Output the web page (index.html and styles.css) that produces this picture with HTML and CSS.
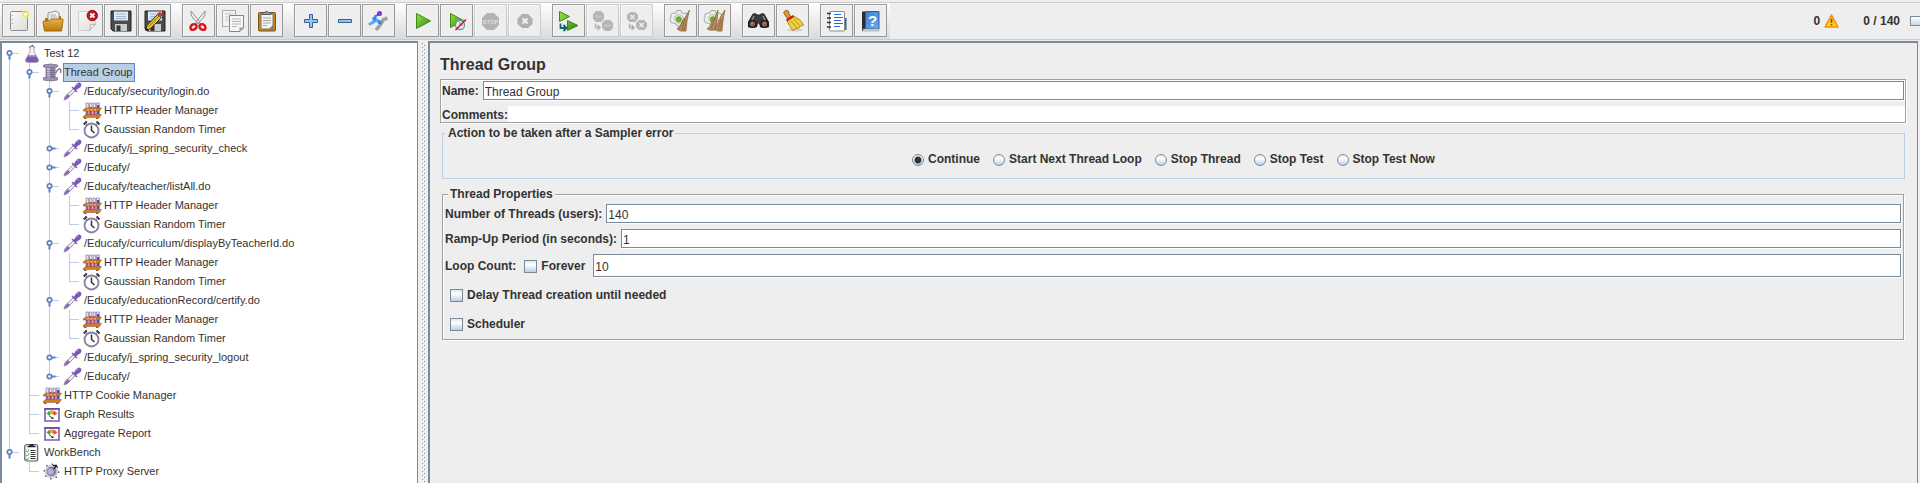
FILE: index.html
```html
<!DOCTYPE html>
<html lang="en">
<head>
<meta charset="utf-8">
<title>Test 12</title>
<link rel="stylesheet" href="styles.css">
</head>
<body>
<svg class="defs" aria-hidden="true">
  <defs>
    <linearGradient id="g-green" x1="0" y1="0" x2="1" y2="1"><stop offset="0" stop-color="#9be04a"/><stop offset="1" stop-color="#2c8a0c"/></linearGradient>
    <linearGradient id="g-folder" x1="0" y1="0" x2="0" y2="1"><stop offset="0" stop-color="#e8b34a"/><stop offset="1" stop-color="#b9780c"/></linearGradient>
    <linearGradient id="g-page" x1="0" y1="0" x2="1" y2="1"><stop offset="0" stop-color="#fafafa"/><stop offset="1" stop-color="#dcdcdc"/></linearGradient>
    <linearGradient id="g-book" x1="0" y1="0" x2="1" y2="1"><stop offset="0" stop-color="#3d7fd6"/><stop offset="1" stop-color="#6fa9ec"/></linearGradient>
    <linearGradient id="g-warn" x1="0" y1="0" x2="0" y2="1"><stop offset="0" stop-color="#ffa41c"/><stop offset="1" stop-color="#ffe600"/></linearGradient>
  </defs>
  <symbol id="flask" viewBox="0 0 20 19">
    <path d="M7 2.500h4v5l4.500 8.500q.5 2.500-2 2.500h-9q-2.500 0-2-2.500L7 7.500z" fill="#f4f2f8" stroke="#a9a4b5"/>
    <path d="M5 11.500h8l2.300 4.500q.3 2-2 2H4.700q-2.300 0-2-2z" fill="#7d5bb5"/><path d="M5 11.500h8V13H4.500z" fill="#9a80ca"/>
    <path d="M6.500 3.500L8 1.500h2l1.500 2" fill="none" stroke="#444" stroke-dasharray="2 1"/>
  </symbol>
  <symbol id="spool" viewBox="0 0 20 19">
    <path d="M2.500 4h10v11h-10z" fill="#8e84a6"/><path d="M4 4h3v11H4z" fill="#c4bcd3"/>
    <path d="M3 7.500h9.500M3 9.500h9.500M3 11.500h9.500M3 13.500h9.500" stroke="#6f658a" stroke-width=".5"/>
    <path d="M.5 2q7-2 14 0v2q-7 1.500-14 0zM.5 14.500q7 1.500 14 0V17q-7 2-14 0z" fill="#a198b4" stroke="#6e6580" stroke-width=".7"/>
    <path d="M12.500 10.500q2-4.500 4-4.500t1 4" fill="none" stroke="#7d7592" stroke-width="1.400"/>
  </symbol>
  <symbol id="dropper" viewBox="0 0 20 19">
    <path d="M1 18l1-3.500L10.500 6.500l2 2L4.500 16.500z" fill="#ececf0" stroke="#8883a0" stroke-width=".9"/>
    <path d="M1.500 17.500l1-3L5 12l2 2-2.500 2.500z" fill="#8a68c0"/>
    <path d="M9 5l5 5" stroke="#7b5ab4" stroke-width="1.500"/>
    <path d="M10.500 6.500l2.500-4q2.500-3 4.500-1.500 2 2-.5 4.500l-4.500 3z" fill="#7b57b8"/><path d="M13.500 3l2-1" stroke="#b9a3df"/>
  </symbol>
  <symbol id="rack" viewBox="0 0 20 19">
    <path d="M3 2h2.400v13H3zM6.500 2h2.400v13H6.500zM10 2h2.400v13H10zM13.500 2h2.800v12h-2.800z" fill="#ebe7f4" stroke="#8f88a8" stroke-width=".8"/>
    <path d="M3 8h2v6H3z" fill="#8469b5"/><path d="M6.700 6h2v8h-2z" fill="#d03062"/><path d="M10.200 6h2v8h-2z" fill="#c34b8c"/><path d="M14 4h2.300v9H14z" fill="#4351c8"/>
    <path d="M0 9l3-2h15.500L16.500 10H0zM0 15.500l3-2h15.500l-2 3H0z" fill="#cf7a2c" stroke="#9b5315" stroke-width=".5"/>
    <path d="M4 8h2v1.500H4zM7.500 8h2v1.500h-2zM11 8h2v1.500h-2z" fill="#e9b27a"/>
    <path d="M1 16.500h2.500v1.500H1zM13 16.500h2.500v1.500H13z" fill="#a95c1b"/>
  </symbol>
  <symbol id="timer" viewBox="0 0 20 19">
    <path d="M.8 4.500l3-3M13.500 1.500l3 3" stroke="#39354a" stroke-width="2"/><path d="M3 4l2 2M14 4l-2 2" stroke="#555"/>
    <circle cx="8.500" cy="10.500" r="7" fill="#fff" stroke="#8a7fa3" stroke-width="1.800"/>
    <path d="M8.500 5.500v5l3 2.500" fill="none" stroke="#333" stroke-width="1.500"/>
  </symbol>
  <symbol id="graph" viewBox="0 0 20 19">
    <path d="M2 4h14v12H2z" fill="#fff" stroke="#7a5fae" stroke-width="1.600"/><path d="M1.200 3.800h15.600" stroke="#6747a3" stroke-width="1.500"/>
    <path d="M3.500 8.500L6 6l2 3-2 1.500z" fill="#3aa53a"/><path d="M6 6q3-1.500 5 0L9.500 9H8z" fill="#f0a030"/><path d="M11 5.500l3.500 3-3 2-2-1.500z" fill="#e9552f"/>
    <path d="M6 10.500l3 2.500" stroke="#333"/><path d="M8.500 12.500h2V14h-2z" fill="#222"/>
  </symbol>
  <symbol id="clipboard" viewBox="0 0 20 19">
    <rect x="1.700" y="1.500" width="13" height="16.500" rx="2" fill="#e6e4ea" stroke="#6b6678" stroke-width="1.200"/>
    <path d="M3.500 4h9.500v12.500H3.500z" fill="#fff"/><path d="M4.500 3.500h8M6.500 2h4" stroke="#222" stroke-width="1.600"/>
    <path d="M7.500 7.500h5M7.500 9.500h5M7.500 11.500h5M7.500 13.500h5M7.500 15.500h5" stroke="#333"/>
    <path d="M3 8l1.500 1L6 6.500M3 12l1.500 1L6 10.500M3 16l1.500.5L6 14.500" fill="none" stroke="#4db04d"/>
  </symbol>
  <symbol id="proxy" viewBox="0 0 20 19">
    <circle cx="8.500" cy="9.500" r="7" fill="#d9d4e6"/><circle cx="8.500" cy="9.500" r="7.300" fill="none" stroke="#2d2937" stroke-width="1.300" stroke-dasharray="1.300 4.430"/>
    <circle cx="8.500" cy="9.500" r="5" fill="#8d81ab"/><circle cx="7.500" cy="9.500" r="3" fill="#b8aed0"/>
    <path d="M10.500 7l3-3M10 3.500h4" fill="none" stroke="#1f1b29" stroke-width="1.300"/>
  </symbol>
  <symbol id="open" viewBox="0 0 9 11"><path d="M4.500 5v5.500" stroke="#5d80bf" stroke-width="2"/><circle cx="4.500" cy="4" r="2.200" fill="#fff" stroke="#5d80bf" stroke-width="1.700"/></symbol>
  <symbol id="shut" viewBox="0 0 11 11"><path d="M5 4.500h5.500" stroke="#5d80bf" stroke-width="2"/><circle cx="4.500" cy="4.500" r="2.200" fill="#fff" stroke="#5d80bf" stroke-width="1.700"/></symbol>
  <symbol id="floppy" viewBox="0 0 23 23">
    <path d="M2 2h20v20H4l-2-2z" fill="#484c50" stroke="#222"/><path d="M5 2.500h14v9H5z" fill="#dfeaf5"/><path d="M7 5h10M7 7.500h10M7 9.500h10" stroke="#9fb8d0"/>
    <path d="M6 15h12v7H6z" fill="#c9cccf"/><path d="M7.500 16.500h4V22h-4z" fill="#33373b"/>
  </symbol>
  <symbol id="gear" viewBox="0 0 23 23">
    <path d="M8 1.500h4l.5 2 2.500 1 2-.5 2 3-1.500 2v3l-2 3-3 .5-1 1.500H8l-1-2-3-1-2-.5L1 10l1-2 0-3 3-1 2 0z" fill="#eeeeec" stroke="#a9aba7"/>
    <circle cx="9.800" cy="9.800" r="4.500" fill="#dcdedb" stroke="#c2c4c0"/><circle cx="9.800" cy="10.300" r="2.600" fill="#65bb22" stroke="#489010" stroke-width=".6"/>
  </symbol>
</svg>

<header class="topbar">
  <div class="toolbar" role="toolbar" aria-label="Main">
    <div class="group">
      <button class="tool" aria-label="New"><svg viewBox="0 0 23 23"><rect x="3.500" y="2.500" width="17" height="19" rx="1" fill="url(#g-page)" stroke="#8b8b88"/><path d="M5.500 6v1M5.500 10v1M5.500 14v1" stroke="#999"/><circle cx="18.700" cy="5.300" r="4" fill="#f6ee7a" opacity=".7"/><circle cx="18.700" cy="5.300" r="2.200" fill="#fffde0" stroke="#ead94c"/></svg></button>
      <button class="tool" aria-label="Open"><svg viewBox="0 0 23 23"><path d="M4 9h3l2-2h11v14H4z" fill="#a8731a"/><path d="M7 4l8-2 3 2v11H7z" fill="#f6f6f4" stroke="#8c8c88"/><path d="M9 6h6M9 8h7" stroke="#aaa"/><path d="M2 13q0-1 1-1h5l2-2h11q1.500 0 1 1.500L20.500 22H3.500z" fill="url(#g-folder)" stroke="#a8690a"/></svg></button>
      <button class="tool" aria-label="Close"><svg viewBox="0 0 23 23"><path d="M3.500 2.500h17V15l-6 6.500h-11z" fill="url(#g-page)" stroke="#d0d0ce"/><path d="M20.500 15q-3 1.500-5 .5 1 3-1 6z" fill="#fff" stroke="#a5a5a3" stroke-width=".8"/><circle cx="17.300" cy="6.500" r="5.200" fill="#c8171b" stroke="#8c1214"/><path d="M15.300 4.500l4 4M19.300 4.500l-4 4" stroke="#fff" stroke-width="1.800"/></svg></button>
      <button class="tool" aria-label="Save"><svg><use href="#floppy"/></svg></button>
      <button class="tool" aria-label="Save as"><svg viewBox="0 0 23 23"><use href="#floppy"/><path d="M3 21.500l1-5L14.500 5.500l4 3L7.500 19.500z" fill="#f3c22c" stroke="#33270a"/><path d="M5.500 18L16 7" stroke="#8d6910"/><path d="M14 5.500l1.500-2q2-1.500 3.500 1t-1 3z" fill="#d8342c"/><path d="M2.500 22l1-3 2 1.500z" fill="#222"/></svg></button>
    </div>
    <div class="group">
      <button class="tool" aria-label="Cut"><svg viewBox="0 0 23 23"><path d="M4 2q-1 4 2 7l5.500 6 1.500-2zM18 2q1 4-2 7l-5.500 6-1.500-2z" fill="#f0f0ee" stroke="#8f918d"/><ellipse cx="6.500" cy="18" rx="3.300" ry="2.600" transform="rotate(-40 6.500 18)" fill="none" stroke="#d3171d" stroke-width="2.400"/><ellipse cx="15.500" cy="18" rx="3.300" ry="2.600" transform="rotate(40 15.500 18)" fill="none" stroke="#d3171d" stroke-width="2.400"/></svg></button>
      <button class="tool" aria-label="Copy"><svg viewBox="0 0 23 23"><rect x="1.500" y="1.500" width="13" height="16" fill="#f1f1ef" stroke="#adadab"/><path d="M4 5h8M4 8h8M4 11h4" stroke="#c4c4c2"/><path d="M8.500 6.500h14V19l-3.500 3.500H8.500z" fill="#f6f6f4" stroke="#858583"/><path d="M11 10h9M11 12.500h9M11 15h9M11 17.500h5" stroke="#b5b5b3"/><path d="M22.500 18.500h-4v4z" fill="#999"/></svg></button>
      <button class="tool" aria-label="Paste"><svg viewBox="0 0 23 23"><rect x="3.500" y="3.500" width="17" height="18.500" rx="1" fill="#c88619" stroke="#7d520b"/><path d="M6 5h12v15H6z" fill="#f4f4f2" stroke="#777"/><path d="M8 9h8M8 11.500h8M8 14h8M8 16.500h4" stroke="#a5a5a3"/><path d="M18 16l-4 4h4z" fill="#777"/><path d="M7 5.500V3.500h2.500q2-2.500 4 0H16v2z" fill="#9a9c98" stroke="#555753"/></svg></button>
    </div>
    <div class="group">
      <button class="tool" aria-label="Expand all"><svg viewBox="0 0 23 23"><path d="M10.500 5.500h3v5h5v3h-5v5h-3v-5h-5v-3h5z" fill="#9fbfe3" stroke="#2f62a5"/></svg></button>
      <button class="tool" aria-label="Collapse all"><svg viewBox="0 0 23 23"><path d="M5.500 10.500h13v3h-13z" fill="#9fbfe3" stroke="#2f62a5"/></svg></button>
      <button class="tool" aria-label="Toggle"><svg viewBox="0 0 23 23"><path d="M20.500 9l-4 1.500-3 5L9 21" fill="none" stroke="#a1a1a3" stroke-width="3.500"/><path d="M12.500 5L8 7.500 7 13l-5 2.500" fill="none" stroke="#7a48d0" stroke-width="2"/><circle cx="12.500" cy="4.500" r="2.500" fill="#7437d8"/><path d="M7 8l6 6M2 15.500l5-3 5-1" fill="none" stroke="#4cb4f4" stroke-width="2.500"/><path d="M5.500 8h3.500v3.500H5.500zM11 11.500h3.500V15H11z" fill="#2f8be8"/></svg></button>
    </div>
    <div class="group">
      <button class="tool" aria-label="Start"><svg viewBox="0 0 23 23"><path d="M5.500 4.500v15l14-7.500z" fill="url(#g-green)" stroke="#3a8a14"/></svg></button>
      <button class="tool" aria-label="Start no pauses"><svg viewBox="0 0 23 23"><path d="M5.500 4.500v14l13-7z" fill="url(#g-green)" stroke="#3a8a14"/><circle cx="15" cy="16" r="4.500" fill="#eef3f8" stroke="#6d93b8" stroke-width="1.300"/><path d="M15 13v3h3" fill="none" stroke="#5a86b0"/><path d="M10.500 21L21 10.500" stroke="#d5161a" stroke-width="1.600"/></svg></button>
      <button class="tool" disabled aria-label="Stop"><svg viewBox="0 0 23 23"><path d="M8 4h7l5 5v7l-5 5H8l-5-5V9z" fill="#b3b3b3"/><text x="11.500" y="15" class="stop-text">STOP</text></svg></button>
      <button class="tool" disabled aria-label="Shutdown"><svg viewBox="0 0 23 23"><path d="M9 5h6l4.500 4.500v5.500L15 19H9l-4.500-4V9.500z" fill="#b0b0b0"/><path d="M9.500 9.500l5 5M14.500 9.500l-5 5" stroke="#eee" stroke-width="2.300"/></svg></button>
    </div>
    <div class="group">
      <button class="tool" aria-label="Remote start all"><svg viewBox="0 0 23 23"><path d="M2.500 2.500v10l10-5zM10.500 11.500v10l10.500-5z" fill="url(#g-green)" stroke="#3a8a14"/><path d="M3.500 14.500v4.500h5M6.500 16l3 3-3 3" fill="none" stroke="#14646e" stroke-width="1.800"/></svg></button>
      <button class="tool" disabled aria-label="Remote stop all"><svg viewBox="0 0 23 23"><path d="M5 2h5l3 3v5l-3 3H5l-3-3V5zM14 11h5l3 3v5l-3 3h-5l-3-3v-5z" fill="#b5b5b5"/><path d="M4 7.500h7M13 16.500h7" stroke="#c6c6c6" stroke-width="2"/><path d="M4.500 14.500v4h4M6.500 16l2.500 2.500L6.500 21" fill="none" stroke="#b0b0b0" stroke-width="1.500"/></svg></button>
      <button class="tool" disabled aria-label="Remote shutdown all"><svg viewBox="0 0 23 23"><path d="M5 3h5l3 3v4l-3 3H5l-3-3V6zM14 11h5l3 3v4l-3 3h-5l-3-3v-4z" fill="#b5b5b5"/><path d="M5.500 6l4 4M9.500 6l-4 4M14.500 14l4 4M18.500 14l-4 4" stroke="#eee" stroke-width="1.600"/><path d="M4.500 14.500v4h4M6.500 16l2.500 2.500L6.500 21" fill="none" stroke="#b0b0b0" stroke-width="1.500"/></svg></button>
    </div>
    <div class="group">
      <button class="tool" aria-label="Clear"><svg viewBox="0 0 23 23"><use href="#gear"/><path d="M20.500 1L18 11l-1 11q-6 1-9-2 4-3 6-9l3-4z" fill="#b98d5c" stroke="#85603a" stroke-width=".7"/><path d="M16 9l-3 12M18 10l-3 11M14 12l-4 8" stroke="#8a643a" stroke-width=".8"/></svg></button>
      <button class="tool" aria-label="Clear all"><svg viewBox="0 0 23 23"><use href="#gear"/><path d="M15 1l-1 10-2 10q-5 1-8-1 4-3 5-8l3-4zM22 1l-2 10-1 11q-5 1-8-2 3-3 5-9l2-4z" fill="#b98d5c" stroke="#85603a" stroke-width=".7"/><path d="M12 9L8 20M18 10l-3 11M20 10l-3 11" stroke="#8a643a" stroke-width=".8"/></svg></button>
    </div>
    <div class="group">
      <button class="tool" aria-label="Search"><svg viewBox="0 0 23 23"><path d="M6 5q3-1 4 1h3q1-2 4-1l4.500 8v5h-8l-1-4h-2l-1 4h-8v-5z" fill="#3a3a3a" stroke="#222"/><path d="M7 7l-2 4M16 7l2 4" stroke="#8d8d8d" stroke-width="1.500"/><circle cx="5.500" cy="15" r="3.400" fill="#875f4b" stroke="#181818" stroke-width="1.400"/><circle cx="17.500" cy="15" r="3.400" fill="#875f4b" stroke="#181818" stroke-width="1.400"/><path d="M4 15.500l2-2M16 15.500l2-2" stroke="#e6a077"/></svg></button>
      <button class="tool" aria-label="Reset search"><svg viewBox="0 0 23 23"><ellipse cx="14" cy="21" rx="8" ry="1.500" fill="#cfcfcf"/><path d="M3.500 5.500q-2-3 1-4t3.500 3l1.500 3-3 2z" fill="#d99a30" stroke="#98660e"/><path d="M6 11l6.500-4L19 11l3.500 5-3 1-1.500 2-3 .5L12 21.500q-4-5-6-10z" fill="#efd23e" stroke="#a98a10"/><path d="M10 12l6 7M13 10l6 7" stroke="#b99a1a"/><path d="M5.500 11.500l7-4.500" stroke="#cf1b1b" stroke-width="2.200"/></svg></button>
    </div>
    <div class="group">
      <button class="tool" aria-label="Function helper"><svg viewBox="0 0 23 23"><path d="M18 9h3.500v7H18z" fill="#1c62c8"/><path d="M18 16h3.500v5H18z" fill="#2b8a2b"/><rect x="4.500" y="2.500" width="15" height="19.500" rx="1" fill="#fff" stroke="#8c8c8c"/><path d="M2 4.500h4M2 9h4M2 13.500h4M2 18h4" stroke="#333" stroke-width="1.300"/><path d="M9 5.500h7M9 8.500h9M9 11.500h7M9 14.500h9M9 17.500h6" stroke="#2468e0"/></svg></button>
      <button class="tool" aria-label="Help"><svg viewBox="0 0 23 23"><path d="M3 2.500h4V22H3z" fill="#2a2e36"/><path d="M6.500 2.500h13.500V20H6.500z" fill="url(#g-book)" stroke="#2a5ca8"/><path d="M4 20h16v2H4z" fill="#d6dae0" stroke="#8d939c" stroke-width=".6"/><text x="13.500" y="17" class="help-text">?</text></svg></button>
    </div>
  </div>
  <div class="status">
    <span>0</span>
    <svg class="warn" viewBox="0 0 15 14"><path d="M7.500 1L14 13H1z" fill="url(#g-warn)" stroke="#f08a1c" stroke-width="1.500" stroke-linejoin="round"/><path d="M7.500 5v4M7.500 10v1.500" stroke="#9a4a0a" stroke-width="1.600"/></svg>
    <span class="threads">0 / 140</span>
    <span class="lamp"></span>
  </div>
</header>

<div class="workspace">
  <nav class="tree" aria-label="Test plan">
    <ul>
      <li><div class="row"><button class="handle" aria-label="Collapse"><svg><use href="#open"/></svg></button><svg class="icon"><use href="#flask"/></svg><span class="label">Test 12</span></div>
        <ul>
          <li><div class="row"><button class="handle" aria-label="Collapse"><svg><use href="#open"/></svg></button><svg class="icon"><use href="#spool"/></svg><span class="label selected">Thread Group</span></div>
            <ul>
              <li><div class="row"><button class="handle" aria-label="Collapse"><svg><use href="#open"/></svg></button><svg class="icon"><use href="#dropper"/></svg><span class="label">/Educafy/security/login.do</span></div>
                <ul>
                  <li><div class="row"><svg class="icon"><use href="#rack"/></svg><span class="label">HTTP Header Manager</span></div></li>
                  <li><div class="row"><svg class="icon"><use href="#timer"/></svg><span class="label">Gaussian Random Timer</span></div></li>
                </ul>
              </li>
              <li><div class="row"><button class="handle" aria-label="Expand"><svg><use href="#shut"/></svg></button><svg class="icon"><use href="#dropper"/></svg><span class="label">/Educafy/j_spring_security_check</span></div></li>
              <li><div class="row"><button class="handle" aria-label="Expand"><svg><use href="#shut"/></svg></button><svg class="icon"><use href="#dropper"/></svg><span class="label">/Educafy/</span></div></li>
              <li><div class="row"><button class="handle" aria-label="Collapse"><svg><use href="#open"/></svg></button><svg class="icon"><use href="#dropper"/></svg><span class="label">/Educafy/teacher/listAll.do</span></div>
                <ul>
                  <li><div class="row"><svg class="icon"><use href="#rack"/></svg><span class="label">HTTP Header Manager</span></div></li>
                  <li><div class="row"><svg class="icon"><use href="#timer"/></svg><span class="label">Gaussian Random Timer</span></div></li>
                </ul>
              </li>
              <li><div class="row"><button class="handle" aria-label="Collapse"><svg><use href="#open"/></svg></button><svg class="icon"><use href="#dropper"/></svg><span class="label">/Educafy/curriculum/displayByTeacherId.do</span></div>
                <ul>
                  <li><div class="row"><svg class="icon"><use href="#rack"/></svg><span class="label">HTTP Header Manager</span></div></li>
                  <li><div class="row"><svg class="icon"><use href="#timer"/></svg><span class="label">Gaussian Random Timer</span></div></li>
                </ul>
              </li>
              <li><div class="row"><button class="handle" aria-label="Collapse"><svg><use href="#open"/></svg></button><svg class="icon"><use href="#dropper"/></svg><span class="label">/Educafy/educationRecord/certify.do</span></div>
                <ul>
                  <li><div class="row"><svg class="icon"><use href="#rack"/></svg><span class="label">HTTP Header Manager</span></div></li>
                  <li><div class="row"><svg class="icon"><use href="#timer"/></svg><span class="label">Gaussian Random Timer</span></div></li>
                </ul>
              </li>
              <li><div class="row"><button class="handle" aria-label="Expand"><svg><use href="#shut"/></svg></button><svg class="icon"><use href="#dropper"/></svg><span class="label">/Educafy/j_spring_security_logout</span></div></li>
              <li><div class="row"><button class="handle" aria-label="Expand"><svg><use href="#shut"/></svg></button><svg class="icon"><use href="#dropper"/></svg><span class="label">/Educafy/</span></div></li>
            </ul>
          </li>
          <li><div class="row"><svg class="icon"><use href="#rack"/></svg><span class="label">HTTP Cookie Manager</span></div></li>
          <li><div class="row"><svg class="icon"><use href="#graph"/></svg><span class="label">Graph Results</span></div></li>
          <li><div class="row"><svg class="icon"><use href="#graph"/></svg><span class="label">Aggregate Report</span></div></li>
        </ul>
      </li>
      <li><div class="row"><button class="handle" aria-label="Collapse"><svg><use href="#open"/></svg></button><svg class="icon"><use href="#clipboard"/></svg><span class="label">WorkBench</span></div>
        <ul>
          <li><div class="row"><svg class="icon"><use href="#proxy"/></svg><span class="label">HTTP Proxy Server</span></div></li>
        </ul>
      </li>
    </ul>
  </nav>
  <div class="divider"><div class="grip"></div></div>
  <main class="panel">
    <h1>Thread Group</h1>
    <div class="identity">
      <div class="field"><label for="name">Name:</label><input class="text" id="name" value="Thread Group"></div>
      <div class="field comments"><label for="comments">Comments:</label><input class="text plain" id="comments"></div>
    </div>
    <fieldset class="action">
      <legend>Action to be taken after a Sampler error</legend>
      <div class="radios">
        <label><input type="radio" name="onerror" checked>Continue</label>
        <label><input type="radio" name="onerror">Start Next Thread Loop</label>
        <label><input type="radio" name="onerror">Stop Thread</label>
        <label><input type="radio" name="onerror">Stop Test</label>
        <label><input type="radio" name="onerror">Stop Test Now</label>
      </div>
    </fieldset>
    <fieldset class="properties">
      <legend>Thread Properties</legend>
      <div class="field"><label for="users">Number of Threads (users):</label><input class="text" id="users" value="140"></div>
      <div class="field"><label for="ramp">Ramp-Up Period (in seconds):</label><input class="text" id="ramp" value="1"></div>
      <div class="field loop"><label for="loops">Loop Count:</label><label class="check"><input type="checkbox">Forever</label><input class="text" id="loops" value="10"></div>
      <div class="option"><label class="check"><input type="checkbox">Delay Thread creation until needed</label></div>
      <div class="option"><label class="check"><input type="checkbox">Scheduler</label></div>
    </fieldset>
  </main>
</div>
</body>
</html>
```
FILE: styles.css
```css
* { box-sizing: border-box; }

body {
  margin: 0;
  height: 100vh;
  display: flex;
  flex-direction: column;
  overflow: hidden;
  background: #eee;
  color: #333;
  font: bold 12px/15px "Liberation Sans", Arial, sans-serif;
}

button { font: inherit; padding: 0; }
.defs { position: absolute; width: 0; height: 0; }

/* Toolbar */
.topbar {
  display: flex;
  justify-content: space-between;
  margin-top: 2px;
  border-top: 1px solid #ccc;
  border-bottom: 1px solid #ccc;
}

.toolbar {
  display: flex;
  gap: 11px;
  padding: 1px 3px 2px 2px;
  background: linear-gradient(#fff, #dadada);
}

.group { display: flex; gap: 1px; }

.tool {
  width: 33px;
  height: 33px;
  padding: 4px;
  border: 1px solid #999;
  background: #eee;
  box-shadow: inset 1px 1px #f8f8f8;
}
.tool:disabled { border-color: #ccc; }
.tool svg { display: block; width: 23px; height: 23px; }

.stop-text { font-size: 6px; text-anchor: middle; fill: #dcdcdc; }
.help-text { font-size: 15px; text-anchor: middle; fill: #fff; }

.status { display: flex; align-items: center; }
.warn { width: 15px; height: 14px; margin: 0 24px 0 4px; }
.lamp {
  width: 10px;
  height: 10px;
  margin-left: 10px;
  border: 1px solid #7a8a99;
  border-right: 0;
  background: linear-gradient(#fff, #c6d8e8);
}

/* Split view */
.workspace {
  flex: 1;
  min-height: 0;
  display: flex;
  padding-right: 2px;
  margin-top: 1px;
}

.tree {
  width: 418px;
  flex: none;
  overflow: hidden;
  border: solid #7a8a99;
  border-width: 2px 1px 0 2px;
  background: #fff;
  font-weight: normal;
  font-size: 11px;
}

.tree ul { list-style: none; margin: 0; padding: 0; }
.tree > ul { padding: 1px 0 0 7px; }
.tree li { position: relative; }
.tree li > ul { padding-left: 20px; }

.tree li::before {
  content: "";
  position: absolute;
  left: 0;
  top: 0;
  bottom: 0;
  width: 1px;
  background: #b8cfe5;
}
.tree li:last-child::before { bottom: auto; height: 10px; }
.tree > ul > li:first-child::before { top: 10px; }

.row {
  position: relative;
  display: flex;
  align-items: center;
  height: 19px;
  padding-left: 14px;
}
.row::before {
  content: "";
  position: absolute;
  left: 0;
  top: 9px;
  width: 10px;
  height: 1px;
  background: #b8cfe5;
}

.handle {
  position: absolute;
  left: -4px;
  top: 5px;
  width: 11px;
  height: 11px;
  border: 0;
  background: none;
}
.handle svg { display: block; width: 9px; height: 11px; }
.handle[aria-label="Expand"] svg { width: 11px; }

.icon { width: 20px; height: 19px; flex: none; }
.label { line-height: 17px; border: 1px solid transparent; white-space: nowrap; }
.selected { background: #b8cfe5; border-color: #6382bf; padding-right: 2px; }

.divider {
  width: 10px;
  flex: none;
  display: flex;
  justify-content: center;
  padding-top: 2px;
}
.grip {
  width: 5px;
  background-image:
    conic-gradient(from 270deg at 1px 1px, #7a8a99 90deg, transparent 0),
    conic-gradient(from 270deg at 1px 1px, #7a8a99 90deg, transparent 0),
    conic-gradient(from 270deg at 1px 1px, #fff 90deg, transparent 0),
    conic-gradient(from 270deg at 1px 1px, #fff 90deg, transparent 0);
  background-size: 4px 4px;
  background-position: 1px 0, 3px 2px, 2px 1px, 0 3px;
}

.panel {
  flex: 1;
  min-width: 0;
  padding: 12px 11px 0 10px;
  border: solid #7a8a99;
  border-width: 2px 1px 0 2px;
}

h1 { margin: 0 0 4px; font-size: 16px; line-height: 20px; }

.identity {
  padding: 1px 0 0 1px;
  border: 1px solid #a0a0a0;
  box-shadow: 1px 1px #fff, inset 1px 1px #fff;
}

.field { display: flex; align-items: center; gap: 4px; }
.field label { padding-top: 2px; white-space: nowrap; }

.text {
  flex: 1;
  min-width: 0;
  height: 19px;
  padding: 2px 1px 0;
  border: 1px solid #7a8a99;
  background: #fff;
  box-shadow: 1px 1px #fff;
  color: #333;
  font: 12px/15px "Liberation Sans", Arial, sans-serif;
}
.identity .text { margin-right: 1px; }
.comments { gap: 0; margin-top: 6px; }
.comments label { line-height: 14px; }
.identity .plain { height: 16px; margin-right: 0; border: 0; box-shadow: none; }

fieldset { min-width: 0; padding: 0; border: 1px solid #a0a0a0; }
legend { margin-left: 3px; padding: 1px 2px 0; background: #eee; line-height: 15px; }

.action { margin: 2px 1px 0 2px; border-color: #b8cfe5; }

.radios { display: flex; justify-content: center; gap: 13px; padding: 11px 0; }
.radios label, .check { display: flex; align-items: center; gap: 4px; }

input[type="radio"], input[type="checkbox"] {
  appearance: none;
  flex: none;
  width: 13px;
  height: 13px;
  margin: 0;
  border: 1px solid #7a8a99;
  background: linear-gradient(#dce8f3, #fff 35%, #b8cfe5);
}
input[type="radio"] { width: 12px; height: 12px; border-radius: 50%; }
input[type="radio"]:checked {
  background: radial-gradient(circle, #333 0 3px, transparent 4px), linear-gradient(#dce8f3, #fff 35%, #b8cfe5);
}

.properties {
  margin: 7px 2px 0 2px;
  padding: 2px 2px 0 2px;
  box-shadow: 1px 1px #fff, inset 1px 1px #fff;
}
.properties .field { margin-bottom: 6px; }
.properties .loop { gap: 8px; margin-bottom: 4px; }
.loop .text { height: 23px; }
.option { display: flex; align-items: center; height: 29px; padding-left: 5px; }
```
